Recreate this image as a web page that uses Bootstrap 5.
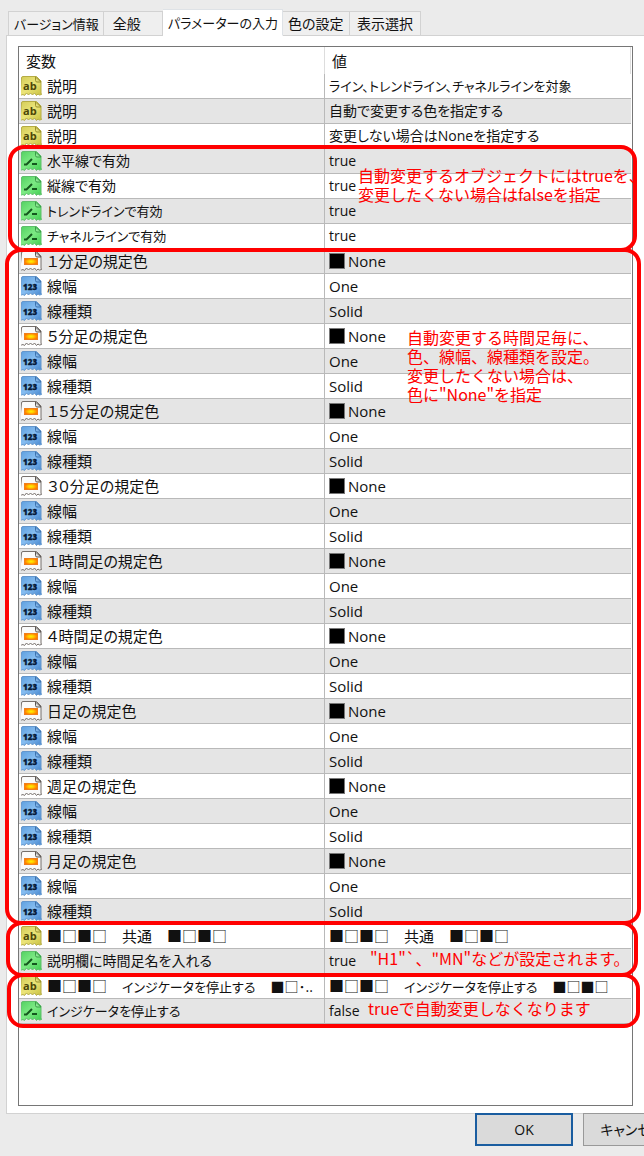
<!DOCTYPE html>
<html lang="ja">
<head>
<meta charset="utf-8">
<meta name="viewport" content="width=device-width, initial-scale=1">
<title>パラメーターの入力</title>
<link href="https://cdn.jsdelivr.net/npm/bootstrap@5.3.0/dist/css/bootstrap.min.css" rel="stylesheet">
<style>
  body { background: #ebebeb; color: #111; font-family: "Open Sans", "Noto Sans CJK JP", sans-serif; font-size: 15px; line-height: 20px; overflow-x: hidden; }
  .defs { position: absolute; width: 0; height: 0; }
  .k14 { font-size: 14px; }
  .k13 { font-size: 13px; }
  .tab-strip { padding: 9px 0 0 8px; margin-bottom: -1px; position: relative; border: 0; }
  .tab-strip .nav-link { height: 25px; padding: 0 5px; margin: 0; border: 1px solid #d2d2d2; border-left-width: 0; border-radius: 0; background: #efefef; color: #111; line-height: 24px; text-align: left; white-space: nowrap; font-feature-settings: "palt"; }
  .tab-strip .nav-item:first-child .nav-link { border-left-width: 1px; }
  .tab-strip .nav-link.active { height: 27px; background: #fff; border-bottom-color: #fff; color: #111; text-align: center; }
  .w-version { width: 96px; } .w-general { width: 59px; } .w-input { width: 120px; } .w-color { width: 67px; } .w-view { width: 71px; }
  .sheet { margin-left: 6px; padding: 10px 11px 7px; background: #fff; border: 1px solid #d2d2d2; border-right: 0; }
  .listbox { border: 1px solid #767676; min-height: 1060px; padding-right: 1px; }
  .params { table-layout: fixed; width: 100%; border-collapse: separate; border-spacing: 0; font-feature-settings: "palt"; }
  .params th { height: 27px; padding: 0 7px; font-weight: 400; border-right: 1px solid #ddd; }
  .params td { height: 25px; padding: 0 4px; border-bottom: 1px solid #b9b9b9; white-space: nowrap; overflow: hidden; line-height: 20px; }
  .params td:first-child { border-right: 1px solid #b9b9b9; padding: 0 0 0 2px; }
  .params tbody tr:nth-child(even) { background: #e5e5e5; }
  .params svg { width: 21px; height: 20px; margin-right: 5px; vertical-align: top; }
  .swatch { display: inline-block; width: 16px; height: 16px; margin: 2px 3px 0 0; vertical-align: top; background: #000; border: 1px solid #777; }
  .frame-red { position: absolute; border: 4px solid #f00; border-radius: 16px; pointer-events: none; }
  .frame-flags { top: 98px; height: 107px; left: -11px; right: -5px; }
  .frame-times { top: 201px; height: 677px; left: -14px; right: -9px; }
  .frame-common { top: 874px; height: 56px; left: -13px; right: -6px; }
  .frame-stop { top: 926px; height: 55px; left: -12px; right: -8px; }
  .note { position: absolute; margin: 0; color: #f00; font-family: "Noto Sans CJK JP", sans-serif; font-size: 16px; line-height: 19px; white-space: nowrap; }
  .note-flags { top: 119px; left: 339px; }
  .note-times { top: 281px; left: 388px; }
  .note-common { top: 902px; left: 351px; }
  .note-stop { top: 952px; left: 349px; }
  .actions { gap: 10px; margin: -1px -37px 0 0; position: relative; }
  .dialog-btn { width: 98px; height: 33px; padding: 0; flex: none; border: 1px solid #999; border-radius: 0; background: #dadada; color: #111; font-size: 14px; line-height: 20px; font-feature-settings: "palt"; }
  .dialog-btn.is-default { border: 2px solid #1a5da0; }
</style>
</head>
<body>
<svg class="defs" aria-hidden="true">
  <defs>
  <linearGradient id="g-yellow" x2="1" y2="1"><stop stop-color="#d2cb57"/><stop offset=".5" stop-color="#ebe478"/><stop offset="1" stop-color="#c9c13f"/></linearGradient>
  <linearGradient id="g-green" x2="1" y2="1"><stop stop-color="#50d060"/><stop offset=".5" stop-color="#7dea84"/><stop offset="1" stop-color="#3fce50"/></linearGradient>
  <linearGradient id="g-blue" x2="1" y2="1"><stop stop-color="#5c9ede"/><stop offset=".5" stop-color="#86bdf1"/><stop offset="1" stop-color="#4687cf"/></linearGradient>
  <radialGradient id="g-orange"><stop stop-color="#fff000"/><stop offset=".4" stop-color="#ffd000"/><stop offset="1" stop-color="#ff7a00"/></radialGradient>
  <path id="paper" d="M.5 2q0-1.500 1.500-1.500H15.500l4.500 4.500V17l.5 1.500-2 .5-1.500-1-1.500 1.500-2-2.500-2 2-2-2-2 2-2-2-2 2.500-1.500-1-1.500.5-1.500-1z"/>
  <path id="fold" d="M14.500 1v3.500q0 1.500 1.500 1.500H20z"/>
  </defs>
  <symbol id="i-ab" viewBox="0 0 21 20"><use href="#paper" fill="url(#g-yellow)" stroke="#b5ac45"/><use href="#fold" fill="#e3dc78" stroke="#9a922d"/><text x="2" y="14" font-family="Open Sans" font-weight="700" font-size="11" fill="#4d4708">ab</text></symbol>
  <symbol id="i-bool" viewBox="0 0 21 20"><use href="#paper" fill="url(#g-green)" stroke="#5fbf6b"/><use href="#fold" fill="#8be792" stroke="#3b9c49"/><path d="M3 13.500H5.500L11 8M11 13h5" fill="none" stroke="#14581d" stroke-width="2"/></symbol>
  <symbol id="i-num" viewBox="0 0 21 20"><use href="#paper" fill="url(#g-blue)" stroke="#6496cc"/><use href="#fold" fill="#7db2e8" stroke="#3e73ae"/><text x="2" y="14" font-family="Open Sans" font-weight="800" font-size="8" fill="#061a38" stroke="#061a38" stroke-width=".3">123</text></symbol>
  <symbol id="i-color" viewBox="0 0 21 20"><use href="#paper" fill="#fafafa" stroke="#77706c"/><use href="#fold" fill="#ddd" stroke="#5d5855"/><rect x="3.500" y="7.500" width="13" height="6" fill="url(#g-orange)" stroke="#f0801c"/></symbol>
</svg>

<ul class="nav nav-tabs tab-strip align-items-end flex-nowrap" role="tablist">
  <li class="nav-item"><button class="nav-link w-version k13" type="button" role="tab">バージョン情報</button></li>
  <li class="nav-item"><button class="nav-link w-general k14" type="button" role="tab">&nbsp;全般</button></li>
  <li class="nav-item"><button class="nav-link active w-input k13" type="button" role="tab" aria-selected="true">パラメーターの入力</button></li>
  <li class="nav-item"><button class="nav-link w-color k14" type="button" role="tab">色の設定</button></li>
  <li class="nav-item"><button class="nav-link w-view k14 text-center" type="button" role="tab">表示選択</button></li>
</ul>

<main class="sheet">
  <div class="listbox position-relative">
    <table class="params">
      <thead><tr><th scope="col">変数</th><th scope="col">値</th></tr></thead>
      <tbody>
        <tr><td><svg><use href="#i-ab"/></svg>説明</td><td class="k13">ライン、トレンドライン、チャネルラインを対象</td></tr>
        <tr><td><svg><use href="#i-ab"/></svg>説明</td><td class="k14">自動で変更する色を指定する</td></tr>
        <tr><td><svg><use href="#i-ab"/></svg>説明</td><td class="k14">変更しない場合はNoneを指定する</td></tr>
        <tr><td class="k14"><svg><use href="#i-bool"/></svg>水平線で有効</td><td class="k14">true</td></tr>
        <tr><td class="k14"><svg><use href="#i-bool"/></svg>縦線で有効</td><td class="k14">true</td></tr>
        <tr><td class="k13"><svg><use href="#i-bool"/></svg>トレンドラインで有効</td><td class="k14">true</td></tr>
        <tr><td class="k13"><svg><use href="#i-bool"/></svg>チャネルラインで有効</td><td class="k14">true</td></tr>
        <tr><td><svg><use href="#i-color"/></svg>１分足の規定色</td><td><span class="swatch"></span>None</td></tr>
        <tr><td><svg><use href="#i-num"/></svg>線幅</td><td>One</td></tr>
        <tr><td><svg><use href="#i-num"/></svg>線種類</td><td>Solid</td></tr>
        <tr><td><svg><use href="#i-color"/></svg>５分足の規定色</td><td><span class="swatch"></span>None</td></tr>
        <tr><td><svg><use href="#i-num"/></svg>線幅</td><td>One</td></tr>
        <tr><td><svg><use href="#i-num"/></svg>線種類</td><td>Solid</td></tr>
        <tr><td><svg><use href="#i-color"/></svg>１５分足の規定色</td><td><span class="swatch"></span>None</td></tr>
        <tr><td><svg><use href="#i-num"/></svg>線幅</td><td>One</td></tr>
        <tr><td><svg><use href="#i-num"/></svg>線種類</td><td>Solid</td></tr>
        <tr><td><svg><use href="#i-color"/></svg>３０分足の規定色</td><td><span class="swatch"></span>None</td></tr>
        <tr><td><svg><use href="#i-num"/></svg>線幅</td><td>One</td></tr>
        <tr><td><svg><use href="#i-num"/></svg>線種類</td><td>Solid</td></tr>
        <tr><td><svg><use href="#i-color"/></svg>１時間足の規定色</td><td><span class="swatch"></span>None</td></tr>
        <tr><td><svg><use href="#i-num"/></svg>線幅</td><td>One</td></tr>
        <tr><td><svg><use href="#i-num"/></svg>線種類</td><td>Solid</td></tr>
        <tr><td><svg><use href="#i-color"/></svg>４時間足の規定色</td><td><span class="swatch"></span>None</td></tr>
        <tr><td><svg><use href="#i-num"/></svg>線幅</td><td>One</td></tr>
        <tr><td><svg><use href="#i-num"/></svg>線種類</td><td>Solid</td></tr>
        <tr><td><svg><use href="#i-color"/></svg>日足の規定色</td><td><span class="swatch"></span>None</td></tr>
        <tr><td><svg><use href="#i-num"/></svg>線幅</td><td>One</td></tr>
        <tr><td><svg><use href="#i-num"/></svg>線種類</td><td>Solid</td></tr>
        <tr><td><svg><use href="#i-color"/></svg>週足の規定色</td><td><span class="swatch"></span>None</td></tr>
        <tr><td><svg><use href="#i-num"/></svg>線幅</td><td>One</td></tr>
        <tr><td><svg><use href="#i-num"/></svg>線種類</td><td>Solid</td></tr>
        <tr><td><svg><use href="#i-color"/></svg>月足の規定色</td><td><span class="swatch"></span>None</td></tr>
        <tr><td><svg><use href="#i-num"/></svg>線幅</td><td>One</td></tr>
        <tr><td><svg><use href="#i-num"/></svg>線種類</td><td>Solid</td></tr>
        <tr><td><svg><use href="#i-ab"/></svg>■□■□　共通　■□■□</td><td>■□■□　共通　■□■□</td></tr>
        <tr><td class="k14"><svg><use href="#i-bool"/></svg>説明欄に時間足名を入れる</td><td class="k14">true</td></tr>
        <tr><td><svg><use href="#i-ab"/></svg>■□■□　<span class="k13">インジケータを停止する</span>　<span class="k14">■□･..</span></td><td>■□■□　<span class="k13">インジケータを停止する</span>　<span class="k14">■□■□</span></td></tr>
        <tr><td class="k13"><svg><use href="#i-bool"/></svg>インジケータを停止する</td><td class="k14">false</td></tr>
      </tbody>
    </table>

    <div class="frame-red frame-flags"></div>
    <div class="frame-red frame-times"></div>
    <div class="frame-red frame-common"></div>
    <div class="frame-red frame-stop"></div>
    <p class="note note-flags">自動変更するオブジェクトにはtrueを、<br>変更したくない場合はfalseを指定</p>
    <p class="note note-times">自動変更する時間足毎に、<br>色、線幅、線種類を設定。<br>変更したくない場合は、<br>色に"None"を指定</p>
    <p class="note note-common">"H1"`、"MN"などが設定されます。</p>
    <p class="note note-stop">trueで自動変更しなくなります</p>
  </div>
</main>

<footer class="actions d-flex justify-content-end">
  <button class="btn dialog-btn is-default" type="button">OK</button>
  <button class="btn dialog-btn" type="button">キャンセル</button>
</footer>
<script src="https://cdn.jsdelivr.net/npm/bootstrap@5.3.0/dist/js/bootstrap.bundle.min.js"></script>
</body>
</html>
